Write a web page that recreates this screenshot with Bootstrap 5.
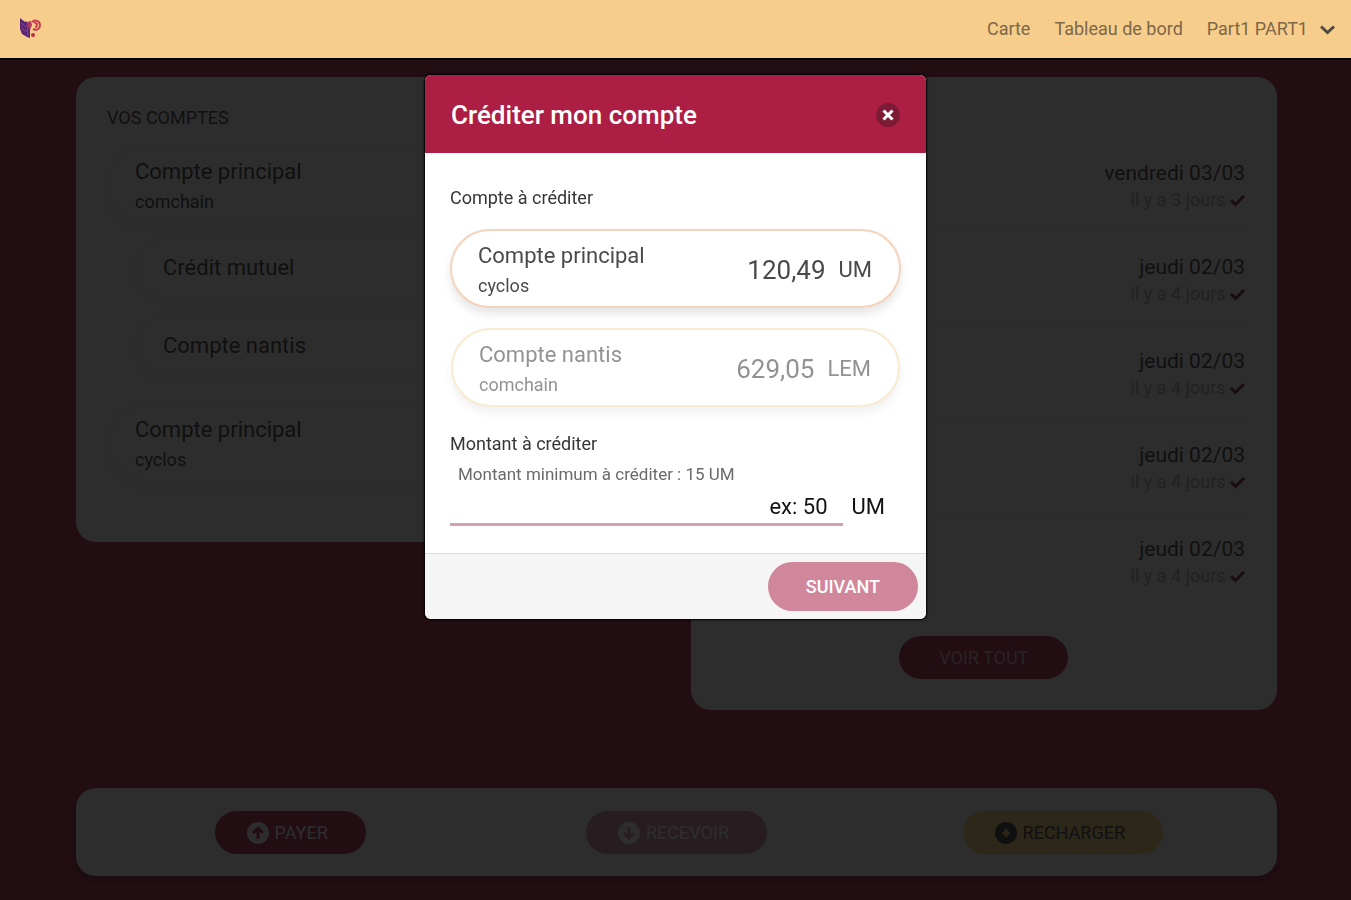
<!DOCTYPE html>
<html lang="fr">
<head>
<meta charset="utf-8">
<meta name="viewport" content="width=device-width, initial-scale=1">
<title>Créditer mon compte</title>
<link href="https://cdn.jsdelivr.net/npm/bootstrap@5.3.0/dist/css/bootstrap.min.css" rel="stylesheet">
<style>
  :root { --brand: #ac1e44; --sand: #f7cd8b; --ink: #363636; }
  body { font-family: Roboto, "Liberation Sans", sans-serif; font-size: 18px; color: var(--ink); background: var(--brand); }
  .topbar { min-height: 60px; background: var(--sand); border-bottom: 2px solid #000; z-index: 1060; padding: 0 16px 0 18px; }
  .topbar a, .topbar button { color: #7d6748; text-decoration: none; font-size: 18px; line-height: 26px; }
  .topbar .menu-links { gap: 24px; }
  .topbar svg.chevron { margin-left: 12px; color: #4e4a44; }
  .page { padding: 17px 74px 24px 76px; }
  .panels { --bs-gutter-x: 28px; }
  .panel { background: #fff; border-radius: 20px; }
  .accounts { padding: 28px 31px 60px; }
  .section-title { font-size: 18px; font-weight: 400; line-height: 26px; margin: 0 0 14px; text-transform: uppercase; }
  .account { display: flex; align-items: center; justify-content: space-between; width: 100%; text-align: left; color: #4a4a4a;
    background: #fff; border: 2px solid #f9e3c3; border-radius: 40px; padding: 9px 27px 6px 26px; box-shadow: 0 6px 10px rgba(0,0,0,.1); }
  .account .title { font-size: 22px; line-height: 32px; }
  .account .kind { font-size: 18px; line-height: 28px; }
  .account .amount { font-size: 26px; line-height: 32px; }
  .account .unit { font-size: 22px; line-height: 32px; margin-left: 13px; }
  .account.chosen { border-color: #f3d3bb; }
  .subaccounts { margin: 14px 0 27px 28px; gap: 18px; }
  .subaccounts .account { padding: 12px 26px; }
  .accounts .account { color: #333; border-color: #fdf3e4; box-shadow: 0 6px 10px rgba(0,0,0,.06); }
  .history { padding: 61px 32px 31px; }
  .operation { padding: 21px 0 18px; border-bottom: 1px solid #f3f3f3; text-align: right; }
  .operation:last-child { border-color: transparent; }
  .operation .day { font-size: 21px; line-height: 28px; }
  .operation .ago { font-size: 18px; line-height: 26px; color: #aaa; }
  .operation svg { color: #701a30; vertical-align: -1px; }
  .pill { border: 0; border-radius: 25px; font-size: 18px; line-height: 27px; padding: 8px 40px; text-transform: uppercase; color: #fff; background: var(--brand); }
  .pill:hover { background: var(--brand); color: #fff; }
  .history .pill { margin-top: 28px; color: #e0b8c4; }
  .actions { padding: 23px 21px 22px; box-shadow: 0 4px 8px rgba(0,0,0,.3); }
  .actions .pill { padding: 8px 38px 8px 32px; }
  .actions .pill.faded { opacity: .5; }
  .actions .pill.refill { background: #f8d070; color: var(--ink); }
  .actions .pill svg { margin-right: 6px; vertical-align: -5px; }
  .modal { top: 60px; height: auto; bottom: 0; background: rgba(10,10,10,.86); }
  .modal-dialog { max-width: 501px; margin: 15px auto; }
  .modal-content { border: 0; border-radius: 6px; box-shadow: 0 0 2px 1px #000; overflow: hidden; color: #4a4a4a; }
  .modal-header { background: var(--brand); color: #fff; border: 0; padding: 23px 26px 21px; border-radius: 0; }
  .modal-title { font-size: 26px; line-height: 34px; font-weight: 500; }
  .close-round { width: 24px; height: 24px; border: 0; border-radius: 50%; padding: 0; background: #7d1a35; color: #fff; display: flex; align-items: center; justify-content: center; }
  .modal-body { padding: 32px 25px 27px; }
  .field-name { display: block; font-size: 18px; line-height: 26px; color: var(--ink); }
  .choices { margin: 18px 0 24px; gap: 20px; }
  .account.other { opacity: .6; width: auto; margin: 0 1px; border-color: #f6dcb4; }
  .hint { font-size: 17px; line-height: 24px; margin: 5px 8px 2px; color: #6a6a6a; }
  .amount-box { flex: 1; min-width: 0; height: 38px; border: 0; border-bottom: 3px solid #d2a0ae; padding: 1px 15px 0; text-align: right; font-size: 22px; color: #111; background: none; outline: 0; }
  .amount-box::placeholder { color: #111; opacity: 1; }
  .amount-unit { font-size: 22px; line-height: 38px; color: #111; padding: 0 16px 0 9px; }
  .modal-footer { background: #f5f5f5; border-top: 1px solid #dbdbdb; padding: 8px; border-radius: 0; }
  .modal-footer > * { margin: 0; }
  .next-step { padding: 11px 38px; background: #d0879c; font-weight: 500; }
</style>
</head>
<body>
<div class="d-flex flex-column min-vh-100">
  <header class="topbar d-flex align-items-center justify-content-between position-sticky top-0">
    <a href="#" aria-label="Accueil">
      <svg class="d-block" width="24" height="24" viewBox="0 0 24 24" fill="none">
        <path d="M2 1l5 4 1-1 4 6v11l-3-1-5-3-2-5z" fill="#5b2676"/>
        <path d="M3 6l5 4M3 11l6 4M9 8l1 11" stroke="#8d477f" stroke-width="1"/>
        <path d="M9 5l4-1 1 4-2 5-2-3z" fill="#b13a59"/>
        <path d="M14 5c3-3 8-1 8 3s-3 6-7 4M16 5l3 2-1 4" stroke="#c63e50" stroke-width="2"/>
        <circle cx="15" cy="18" r="2" fill="#bd304c"/>
      </svg>
    </a>
    <nav class="menu-links d-flex align-items-center">
      <a href="#">Carte</a>
      <a href="#">Tableau de bord</a>
      <button type="button" class="border-0 bg-transparent p-0">Part1 PART1<svg class="chevron" width="15" height="10" viewBox="0 0 15 10" fill="none" stroke="currentColor" stroke-width="3"><path d="M1 1.5l6.500 6 6.500-6"/></svg></button>
    </nav>
  </header>

  <main class="page d-flex flex-column flex-grow-1">
    <div class="row panels align-items-start">
      <div class="col-6">
        <section class="panel accounts">
          <h2 class="section-title">Vos comptes</h2>
          <div class="account"><div><div class="title">Compte principal</div><div class="kind">comchain</div></div></div>
          <div class="subaccounts d-flex flex-column">
            <div class="account"><div class="title">Crédit mutuel</div></div>
            <div class="account"><div class="title">Compte nantis</div></div>
          </div>
          <div class="account"><div><div class="title">Compte principal</div><div class="kind">cyclos</div></div></div>
        </section>
      </div>
      <div class="col-6">
        <section class="panel history text-center">
          <ul class="list-unstyled m-0">
            <li class="operation"><div class="day">vendredi 03/03</div><div class="ago">il y a 3 jours <svg width="15" height="13" viewBox="0 0 15 13" fill="none" stroke="currentColor" stroke-width="3"><path d="M1 6l4.500 4.500L14 2"/></svg></div></li>
            <li class="operation"><div class="day">jeudi 02/03</div><div class="ago">il y a 4 jours <svg width="15" height="13" viewBox="0 0 15 13" fill="none" stroke="currentColor" stroke-width="3"><path d="M1 6l4.500 4.500L14 2"/></svg></div></li>
            <li class="operation"><div class="day">jeudi 02/03</div><div class="ago">il y a 4 jours <svg width="15" height="13" viewBox="0 0 15 13" fill="none" stroke="currentColor" stroke-width="3"><path d="M1 6l4.500 4.500L14 2"/></svg></div></li>
            <li class="operation"><div class="day">jeudi 02/03</div><div class="ago">il y a 4 jours <svg width="15" height="13" viewBox="0 0 15 13" fill="none" stroke="currentColor" stroke-width="3"><path d="M1 6l4.500 4.500L14 2"/></svg></div></li>
            <li class="operation"><div class="day">jeudi 02/03</div><div class="ago">il y a 4 jours <svg width="15" height="13" viewBox="0 0 15 13" fill="none" stroke="currentColor" stroke-width="3"><path d="M1 6l4.500 4.500L14 2"/></svg></div></li>
          </ul>
          <button type="button" class="btn pill">Voir tout</button>
        </section>
      </div>
    </div>

    <section class="panel actions mt-auto">
      <div class="row g-0 text-center">
        <div class="col-4"><button type="button" class="btn pill"><svg width="22" height="22" viewBox="0 0 22 22"><circle cx="11" cy="11" r="11" fill="currentColor"/><path d="M11 17V6M6 11l5-5 5 5" fill="none" stroke="#ac1e44" stroke-width="3"/></svg>Payer</button></div>
        <div class="col-4"><button type="button" class="btn pill faded"><svg width="22" height="22" viewBox="0 0 22 22"><circle cx="11" cy="11" r="11" fill="currentColor"/><path d="M11 5v11M6 11l5 5 5-5" fill="none" stroke="#ac1e44" stroke-width="3"/></svg>Recevoir</button></div>
        <div class="col-4"><button type="button" class="btn pill refill"><svg width="22" height="22" viewBox="0 0 22 22"><circle cx="11" cy="11" r="11" fill="currentColor"/><path d="M11 7v8M7 11h8" fill="none" stroke="#f8d070" stroke-width="3"/></svg>Recharger</button></div>
      </div>
    </section>
  </main>
</div>

<div class="modal d-block" tabindex="-1" role="dialog" aria-labelledby="credit-title">
  <div class="modal-dialog">
    <form class="modal-content">
      <div class="modal-header">
        <h1 class="modal-title" id="credit-title">Créditer mon compte</h1>
        <button type="button" class="close-round" aria-label="Fermer"><svg width="12" height="12" viewBox="0 0 12 12" stroke="currentColor" stroke-width="3"><path d="M1.500 1.500l9 9M10.500 1.500l-9 9"/></svg></button>
      </div>
      <div class="modal-body">
        <span class="field-name">Compte à créditer</span>
        <div class="choices d-flex flex-column">
          <button type="button" class="account chosen">
            <span><span class="title d-block">Compte principal</span><span class="kind d-block">cyclos</span></span>
            <span class="d-flex align-items-center"><span class="amount">120,49</span><span class="unit">UM</span></span>
          </button>
          <button type="button" class="account other">
            <span><span class="title d-block">Compte nantis</span><span class="kind d-block">comchain</span></span>
            <span class="d-flex align-items-center"><span class="amount">629,05</span><span class="unit">LEM</span></span>
          </button>
        </div>
        <label class="field-name" for="amount">Montant à créditer</label>
        <p class="hint">Montant minimum à créditer : 15 UM</p>
        <div class="d-flex">
          <input class="amount-box" id="amount" type="text" inputmode="decimal" placeholder="ex: 50">
          <span class="amount-unit">UM</span>
        </div>
      </div>
      <div class="modal-footer">
        <button type="button" class="btn pill next-step">Suivant</button>
      </div>
    </form>
  </div>
</div>
<script src="https://cdn.jsdelivr.net/npm/bootstrap@5.3.0/dist/js/bootstrap.bundle.min.js"></script>
</body>
</html>
